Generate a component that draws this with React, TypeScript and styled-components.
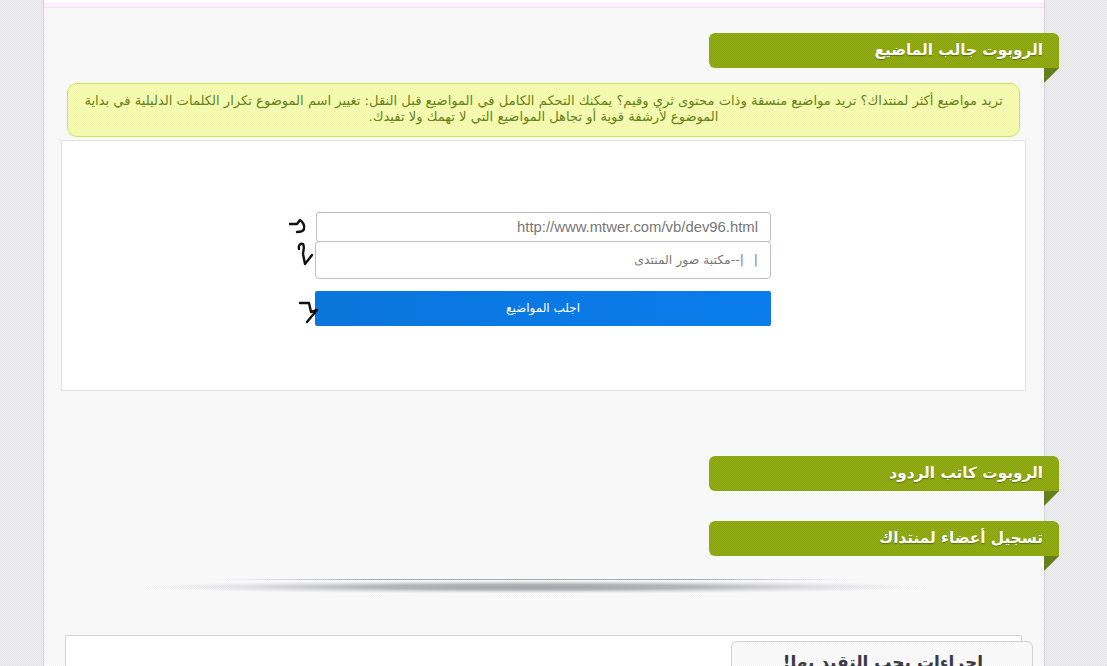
import React from "react";
import styled, { createGlobalStyle, css } from "styled-components";

const checker = (a: string, b: string) => css`
  background-color: ${a};
  background-image: repeating-conic-gradient(${a} 0 25%, ${b} 0 50%);
  background-size: 2px 2px;
`;

const Global = createGlobalStyle`
  html, body { margin: 0; padding: 0; height: 666px; overflow: hidden; }
  body {
    ${checker("#efefef", "#e4e4e6")}
    font-family: "DejaVu Sans", sans-serif;
  }
`;

const Column = styled.main`
  box-sizing: border-box;
  width: 1002px;
  height: 666px;
  margin-left: 43px;
  border-left: 1px solid #d2d2d2;
  border-right: 1px solid #d2d2d2;
  ${checker("#fdfcfd", "#f4f5f4")}
  direction: rtl;
`;

const TopRule = styled.div`
  height: 8px;
  margin-bottom: 25px;
  border-top: 2px solid #fff;
  border-bottom: 1px solid #f0e2f0;
  background: #fdf0fd;
  box-sizing: border-box;
`;

const Ribbon = styled.h2<{ $after: number }>`
  position: relative;
  box-sizing: border-box;
  width: 350px;
  height: 35px;
  margin: 0 -15px ${(p) => p.$after}px 0;
  padding: 0 16px;
  border-radius: 6px 6px 0 6px;
  ${checker("#93ab14", "#88a510")}
  color: #fff;
  font: bold 15.3px/35px "DejaVu Sans", sans-serif;
  text-shadow: 0 1px 1px #5d6e0a;
  &::after {
    content: "";
    position: absolute;
    right: 0;
    top: 100%;
    border-top: 15px solid #647f1c;
    border-right: 15px solid transparent;
  }
`;

const Notice = styled.p`
  box-sizing: border-box;
  width: 953px;
  height: 54px;
  margin: 0 24px 3px 0;
  padding: 9px 10px 0;
  border: 1px solid #cfe44e;
  border-radius: 10px;
  ${checker("#f7fcb6", "#f2f9a6")}
  color: #67801a;
  font: 13.1px/16px "DejaVu Sans", sans-serif;
  text-align: center;
  white-space: nowrap;
`;

const Panel = styled.section`
  box-sizing: border-box;
  width: 965px;
  height: 251px;
  margin: 0 18px 65px 0;
  padding: 71px 254px 0 254px;
  border: 1px solid #e2e2e2;
  background: #fff;
`;

const FieldRow = styled.div`
  position: relative;
  width: 456px;
  margin-bottom: -1px;
`;

const UrlField = styled.input`
  display: block;
  box-sizing: border-box;
  width: 455px;
  height: 30px;
  padding: 0 12px;
  border: 1px solid #c9b8cc;
  border-radius: 3px;
  background: #fff;
  color: #777;
  font: 14.85px "Liberation Sans", sans-serif;
  direction: ltr;
  text-align: right;
  outline: none;
`;

const SelectField = styled.div`
  box-sizing: border-box;
  width: 456px;
  height: 38px;
  display: flex;
  align-items: center;
  gap: 10px;
  padding: 0 12px 1px;
  border: 1px solid #c9b8cc;
  border-radius: 4px;
  background: #fff;
  color: #777;
  font: 12.4px "DejaVu Sans", sans-serif;
`;

const Submit = styled.button`
  display: block;
  box-sizing: border-box;
  width: 456px;
  height: 35px;
  margin-top: 13px;
  padding: 0 0 2px;
  border: 0;
  border-radius: 2px;
  background: linear-gradient(90deg, #0a76dc, #0a7cec);
  color: #fff;
  font: 12px "DejaVu Sans", sans-serif;
`;

const Scribble = styled.svg<{ $top: number; $left: number }>`
  position: absolute;
  top: ${(p) => p.$top}px;
  left: ${(p) => p.$left}px;
  width: 26px;
  height: 28px;
  fill: none;
  stroke: #111;
  stroke-width: 2.4;
  stroke-linecap: round;
  stroke-linejoin: round;
`;

const Shadow = styled.div`
  width: 790px;
  height: 16px;
  margin: 0 115px 40px 0;
  background:
    linear-gradient(90deg, rgba(160,160,170,0) 10%, rgba(160,160,170,.9) 30%, rgba(160,160,170,.9) 70%, rgba(160,160,170,0) 90%) top / 100% 1px no-repeat,
    radial-gradient(ellipse 50% 42% at 50% 50%, #a4a4ac 0%, #b4b5b8 40%, rgba(215,215,218,.7) 72%, rgba(240,240,240,0) 100%);
`;

const BottomCard = styled.section`
  position: relative;
  box-sizing: border-box;
  width: 957px;
  height: 31px;
  margin-right: 22px;
  border: 1px solid #d4d4d4;
  border-bottom: 0;
  background: #fff;
`;

const CardTab = styled.h3`
  position: absolute;
  top: 5px;
  right: -12px;
  box-sizing: border-box;
  width: 302px;
  height: 40px;
  margin: 0;
  padding: 9px 49px 0 0;
  border: 1px solid #d0d0d0;
  border-radius: 6px 6px 0 0;
  ${checker("#fcfcfc", "#f5f5f6")}
  color: #3a3a44;
  font: bold 17px/22px "DejaVu Sans", sans-serif;
`;

export default function App() {
  return (
    <>
      <Global />
      <Column>
        <TopRule />
        <Ribbon $after={15}>الروبوت جالب الماضيع</Ribbon>
        <Notice>
          تريد مواضيع أكثر لمنتداك؟ تريد مواضيع منسقة وذات محتوى ثري وقيم؟ يمكنك التحكم الكامل في المواضيع قبل النقل: تغيير اسم الموضوع تكرار الكلمات الدليلية في بداية
          <br />
          الموضوع لأرشفة قوية أو تجاهل المواضيع التي لا تهمك ولا تفيدك.
        </Notice>
        <Panel>
          <FieldRow>
            <UrlField readOnly value="http://www.mtwer.com/vb/dev96.html" />
            <Scribble $top={4} $left={-27} viewBox="0 0 26 28">
              <path d="M2 8 L9 8 L12 4 C15 6 17 10 16 13 C15 16 12 16 9 16" />
            </Scribble>
          </FieldRow>
          <FieldRow>
            <SelectField>
              <span>|</span>
              <span>|--مكتبة صور المنتدى</span>
            </SelectField>
            <Scribble $top={0} $left={-19} viewBox="0 0 26 28">
              <path d="M3 8 C2 4 5 2 7 3 C9 6 7 10 7 13 L9 23 L16 14" />
            </Scribble>
          </FieldRow>
          <FieldRow>
            <Submit type="button">اجلب المواضيع</Submit>
            <Scribble $top={8} $left={-18} viewBox="0 0 26 28">
              <path d="M3 4 L12 4 L14 13 L20 11 L15 17 L10 23" />
            </Scribble>
          </FieldRow>
        </Panel>
        <Ribbon $after={30}>الروبوت كاتب الردود</Ribbon>
        <Ribbon $after={23}>تسجيل أعضاء لمنتداك</Ribbon>
        <Shadow />
        <BottomCard>
          <CardTab>إجراءات يجب التقيد بها!</CardTab>
        </BottomCard>
      </Column>
    </>
  );
}
